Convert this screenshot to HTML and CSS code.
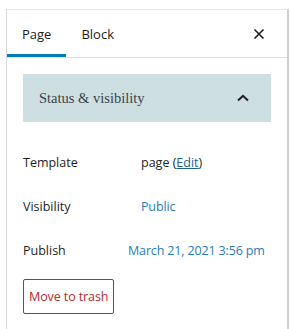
FILE: index.html
```html
<!DOCTYPE html>
<html>
<head>
<meta charset="utf-8">
<link rel="stylesheet" href="styles.css">
</head>
<body>
<div class="sidebar">
  <div class="tabs">
    <button class="tab active">Page</button>
    <button class="tab">Block</button>
    <button class="close" aria-label="Close">
      <svg width="12" height="12" viewBox="0 0 12 12"><path d="M1.5 1.5L10.5 10.5M10.5 1.5L1.5 10.5" stroke="#1e1e1e" stroke-width="1.6" fill="none"/></svg>
    </button>
  </div>
  <div class="content">
    <div class="panel">
      <span class="panel-title">Status &amp; visibility</span>
      <svg class="chev" width="12" height="8" viewBox="0 0 12 8"><path d="M1 6.5L6 1.8L11 6.5" stroke="#1e1e1e" stroke-width="2" fill="none"/></svg>
    </div>
    <div class="rows">
      <div class="row"><span class="label">Template</span><span class="value pad">page (<a class="edit">Edit</a>)</span></div>
      <div class="row"><span class="label">Visibility</span><span class="value pad link">Public</span></div>
      <div class="row"><span class="label">Publish</span><span class="value link">March 21, 2021 3:56 pm</span></div>
    </div>
    <button class="trash">Move to trash</button>
  </div>
</div>
</body>
</html>
```
FILE: styles.css
```css
html, body { margin: 0; padding: 0; background: #fff; }
body { font-family: "Open Sans", "Noto Sans", sans-serif; color: #1e1e1e; font-size: 13px; }
.sidebar {
  margin: 9px 0 0 6px;
  width: 280px;
  height: 330px;
  border-top: 1px solid #e6e6e6;
  border-left: 1px solid #dcdcdc;
  border-right: 2px solid #cfcfcf;
}
.tabs {
  display: flex;
  align-items: stretch;
  height: 47px;
  border-bottom: 1px solid #e0e0e0;
}
.tab {
  background: none; border: 0; margin: 0;
  font: inherit; font-size: 13px; color: #1e1e1e;
  padding: 0 15px;
  border-bottom: 3px solid transparent;
  padding-top: 3px;
}
.tab.active { border-bottom-color: #007cba; }
.close {
  margin-left: auto; margin-right: 22px;
  background: none; border: 0; padding: 0;
  display: flex; align-items: center;
}
.content { padding: 16px 16px 0; }
.panel {
  height: 48px;
  background: #cddfe0;
  display: flex; align-items: center; justify-content: space-between;
  padding: 0 22px 0 16px;
}
.panel-title { font-family: "Liberation Serif", "DejaVu Serif", serif; font-size: 14.5px; color: #3c434a; }
.rows { margin-top: 18px; }
.row { height: 44px; display: flex; align-items: center; white-space: nowrap; font-size: 12.5px; }
.label { width: 105px; flex: none; }
.value.pad { padding-left: 13px; }
.link { color: #2b7bb9; }
.row .link:last-child { letter-spacing: -0.15px; }
.edit { color: #1d5f91; text-decoration: underline; }
.trash {
  margin-top: 7px;
  height: 35px;
  padding: 0 5px;
  background: #fff;
  border: 1px solid #b32d2e;
  border-radius: 2px;
  color: #b32d2e;
  font: inherit; font-size: 12.5px;
  letter-spacing: -0.1px;
}
```
